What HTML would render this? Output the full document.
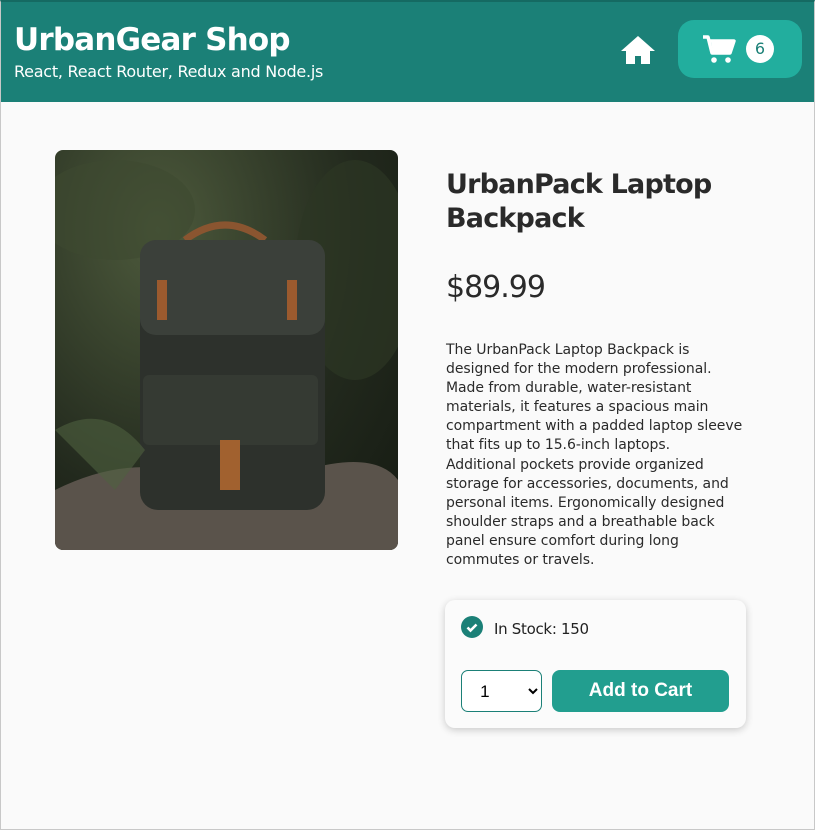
<!DOCTYPE html>
<html><head><style>
*{box-sizing:border-box;margin:0;padding:0}
body{width:815px;height:830px;background:#fafafa;font-family:"DejaVu Sans","Liberation Sans",sans-serif;color:#222;position:relative;overflow:hidden;border:1px solid #c8c8c8;border-top:2px solid #156a62}
.hdr{position:absolute;left:0;top:0;width:813px;height:100px;background:#1b8077}
.t1{position:absolute;left:13px;top:20px;color:#fff;font-weight:bold;font-size:31px;letter-spacing:-0.8px}
.t2{position:absolute;left:13px;top:60px;color:#fff;font-size:16px;letter-spacing:-0.25px}
.cart{position:absolute;left:677px;top:18px;width:124px;height:58px;background:#22ae9e;border-radius:16px}
.badge{position:absolute;left:68px;top:15px;width:28px;height:28px;border-radius:50%;background:#fff;color:#1b8077;font-size:16px;text-align:center;line-height:28px}
.img{position:absolute;left:54px;top:148px;width:343px;height:400px;border-radius:8px;overflow:hidden;background:radial-gradient(ellipse at 30% 20%,#4d5a3c,#22291d 60%,#151a12)}
h1{position:absolute;left:445px;top:166px;font-size:27px;line-height:34px;font-weight:bold;letter-spacing:-0.8px;color:#2a2a2a}
.price{position:absolute;left:445px;top:268px;font-size:30px;letter-spacing:-1px;color:#2a2a2a}
.desc{position:absolute;left:445px;top:339px;width:300px;font-size:14px;line-height:19.1px;letter-spacing:-0.05px;color:#2a2a2a}
.box{position:absolute;left:444px;top:598px;width:301px;height:128px;background:#fbfbfb;border-radius:10px;box-shadow:0 2px 8px rgba(0,0,0,.2)}
.chk{position:absolute;left:16px;top:16px;width:22px;height:22px;border-radius:50%;background:#1b8077}
.stock{position:absolute;left:49px;top:20px;font-size:15px;letter-spacing:-0.3px}
.sel{position:absolute;left:16px;top:70px;width:81px;height:42px;border:1px solid #1b8077;border-radius:7px;background:#fff;font-family:"Liberation Sans",sans-serif;font-size:17px}
.btn{position:absolute;left:107px;top:70px;width:177px;height:42px;background:#229e8f;border-radius:8px;color:#fff;font-family:"Liberation Sans",sans-serif;font-weight:bold;font-size:19px;text-align:center;line-height:42px}
</style></head><body>
<div class="hdr">
<div class="t1">UrbanGear Shop</div>
<div class="t2">React, React Router, Redux and Node.js</div>
<svg style="position:absolute;left:619px;top:33px" width="36" height="30" viewBox="0 0 36 30"><path d="M18 1L1 16h5v13h9v-8h6v8h9V16h5z" fill="#fff"/></svg>
<div class="cart">
<svg style="position:absolute;left:24px;top:14px" width="34" height="30" viewBox="0 0 34 30"><path d="M1 3h5l4 16h18l4-12H8" fill="none" stroke="#fff" stroke-width="3.5" stroke-linejoin="round"/><path d="M9 7h23l-4 12H11z" fill="#fff"/><circle cx="12" cy="26" r="2.8" fill="#fff"/><circle cx="26" cy="26" r="2.8" fill="#fff"/></svg>
<div class="badge">6</div></div>
</div>
<div class="img"><svg width="343" height="400" viewBox="0 0 343 400">
<ellipse cx="60" cy="60" rx="80" ry="50" fill="#3d4a30" opacity=".6"/><ellipse cx="300" cy="120" rx="60" ry="110" fill="#2c3624" opacity=".7"/>
<path d="M0 340 Q80 300 150 330 L250 320 Q320 300 343 330 V400 H0z" fill="#5a534b"/>
<path d="M130 90 Q170 60 210 90" fill="none" stroke="#8a5530" stroke-width="7"/>
<rect x="85" y="90" width="185" height="270" rx="18" fill="#2d312c"/>
<rect x="85" y="90" width="185" height="95" rx="16" fill="#3b403a"/>
<rect x="88" y="225" width="175" height="70" rx="6" fill="#353a33"/>
<rect x="102" y="130" width="10" height="40" fill="#9b5a2e"/><rect x="232" y="130" width="10" height="40" fill="#9b5a2e"/>
<rect x="165" y="290" width="20" height="50" fill="#a1612f"/>
<path d="M0 280 Q50 250 90 300 L60 340z" fill="#4f6040" opacity=".6"/>
</svg></div>
<h1>UrbanPack Laptop<br>Backpack</h1>
<div class="price">$89.99</div>
<div class="desc">The UrbanPack Laptop Backpack is<br>designed for the modern professional.<br>Made from durable, water-resistant<br>materials, it features a spacious main<br>compartment with a padded laptop sleeve<br>that fits up to 15.6-inch laptops.<br>Additional pockets provide organized<br>storage for accessories, documents, and<br>personal items. Ergonomically designed<br>shoulder straps and a breathable back<br>panel ensure comfort during long<br>commutes or travels.</div>
<div class="box">
<div class="chk"><svg width="22" height="22" viewBox="0 0 22 22"><path d="M6.5 11.5l3 3 6-6" fill="none" stroke="#fff" stroke-width="2.6"/></svg></div>
<div class="stock">In Stock: 150</div>
<select class="sel"><option>&nbsp;&nbsp;&nbsp;1</option></select>
<div class="btn">Add to Cart</div>
</div>
</body></html>
